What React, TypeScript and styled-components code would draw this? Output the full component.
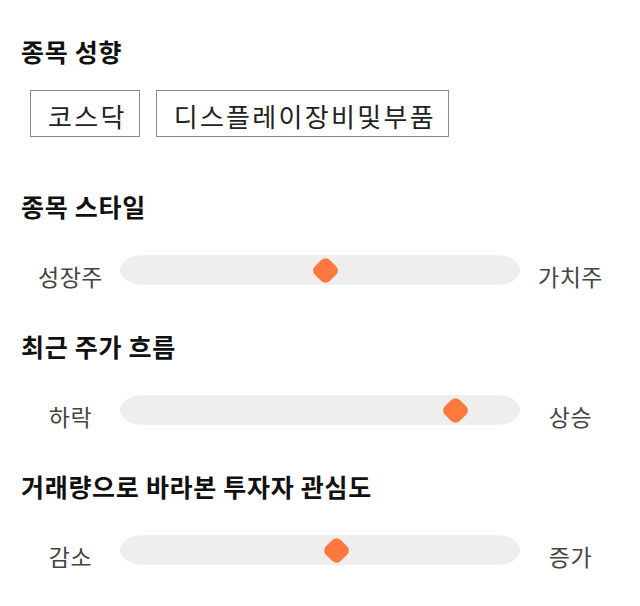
import React from 'react';
import styled, { createGlobalStyle } from 'styled-components';

/**
 * 종목 분석 패널
 * - 종목 성향 태그, 성향 슬라이더 3개
 */

interface SliderItem {
  title: string;
  left: string;
  right: string;
  value: number; // 0 ~ 1
}

const TAGS = ['코스닥', '디스플레이장비및부품'];

const SLIDERS: SliderItem[] = [
  { title: '종목 스타일', left: '성장주', right: '가치주', value: 0.5125 },
  { title: '최근 주가 흐름', left: '하락', right: '상승', value: 0.8375 },
  { title: '거래량으로 바라본 투자자 관심도', left: '감소', right: '증가', value: 0.54 },
];

const App: React.FC = () => {
  return (
    <>
      <GlobalStyle />
      <Page>
        {/* 종목 성향 */}
        <Section $first>
          <Title>종목 성향</Title>
          <TagRow>
            {TAGS.map((tag) => (
              <Tag key={tag}>{tag}</Tag>
            ))}
          </TagRow>
        </Section>

        {/* 슬라이더 영역 */}
        {SLIDERS.map((item) => (
          <Section key={item.title}>
            <Title>{item.title}</Title>
            <SliderRow>
              <SideLabel>{item.left}</SideLabel>
              <Track>
                <Thumb style={{ left: `${item.value * 100}%` }} />
              </Track>
              <SideLabel>{item.right}</SideLabel>
            </SliderRow>
          </Section>
        ))}
      </Page>
    </>
  );
};

/* ===================== styles ===================== */

const GlobalStyle = createGlobalStyle`
  html, body {
    margin: 0;
    padding: 0;
    background: #ffffff;
    font-family: "Noto Sans CJK KR", "Noto Sans", sans-serif;
  }
`;

const Page = styled.div`
  width: 640px;
  box-sizing: border-box;
  padding: 36px 19px 0 21px;
  display: flex;
  flex-direction: column;
  gap: 40px;
`;

const Section = styled.section<{ $first?: boolean }>`
  display: flex;
  flex-direction: column;
  gap: ${(p) => (p.$first ? '24px' : '34px')};
  margin-bottom: ${(p) => (p.$first ? '14px' : '0')};
`;

const Title = styled.h2`
  margin: 0;
  height: 30px;
  line-height: 30px;
  font-size: 25px;
  font-weight: 700;
  color: #111111;
  letter-spacing: 0.7px;
`;

const TagRow = styled.div`
  display: flex;
  gap: 16px;
  padding-left: 9px;
`;

const Tag = styled.div`
  height: 47px;
  box-sizing: border-box;
  padding: 4px 12px 0 17px;
  display: flex;
  align-items: center;
  border: 1px solid #8a8a8a;
  font-size: 26px;
  letter-spacing: 2.3px;
  color: #222222;
  line-height: 1;
`;

const SliderRow = styled.div`
  display: grid;
  grid-template-columns: 99px 400px 101px;
  align-items: start;
`;

const SideLabel = styled.span`
  margin-top: 6px;
  text-align: center;
  font-size: 23px;
  letter-spacing: 0.5px;
  color: #444444;
  line-height: 30px;
`;

const Track = styled.div`
  position: relative;
  height: 30px;
  background: #eeeeee;
  border-radius: 22px / 15px;
`;

const Thumb = styled.div`
  position: absolute;
  top: 50%;
  width: 21px;
  height: 21px;
  margin-left: -10.5px;
  margin-top: -10.5px;
  background: #ff783d;
  border-radius: 6px;
  transform: rotate(45deg);
`;

export default App;
